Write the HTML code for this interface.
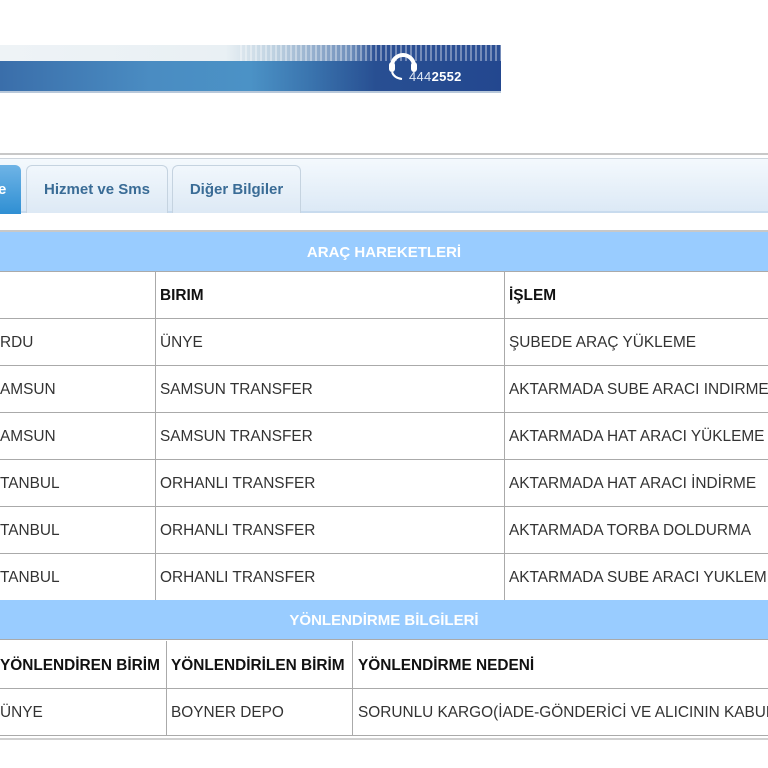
<!DOCTYPE html>
<html><head><meta charset="utf-8"><style>
*{margin:0;padding:0;box-sizing:border-box}
body{width:768px;height:768px;overflow:hidden;background:#fff;font-family:"Liberation Sans",Arial,sans-serif;position:relative}
.abs{position:absolute}
.cell{position:absolute;font-size:15.4px;color:#333;line-height:47px;white-space:nowrap;overflow:hidden;top:1px}
.hd{font-weight:bold;color:#111}
.hl{position:absolute;left:0;width:768px;height:1px;background:#aaa}
.vl{position:absolute;width:1px;background:#aaa}
.bh{position:absolute;left:0;width:768px;height:40px;background:#99ccff;color:#fff;font-weight:bold;font-size:15px;text-align:center;line-height:41px;border-bottom:1px solid #aaa}
</style></head><body>
<div class="abs" style="left:0;top:45px;width:501px;height:16px;background:linear-gradient(90deg,#eef3f6 0%,#e9f0f4 45%,#bcd0e0 55%,#6f8fbb 70%,#2b4f93 75%,#2b4f93 100%)"></div>
<div class="abs" style="left:240px;top:45px;width:261px;height:16px;background:repeating-linear-gradient(90deg,rgba(255,255,255,0.35) 0 2px,rgba(255,255,255,0) 2px 5px)"></div>
<div class="abs" style="left:0;top:61px;width:501px;height:30px;background:linear-gradient(90deg,#3a6eaa 0%,#4a8cc2 30%,#4b92c6 50%,#3a74ae 62%,#284f92 75%,#23478f 100%)"></div>
<div class="abs" style="left:0;top:91px;width:501px;height:2px;background:#b8c8da"></div>
<svg class="abs" style="left:388px;top:48px" width="30" height="34" viewBox="0 0 30 34"><path d="M4 18 A11 11 0 0 1 26 18" fill="none" stroke="#fff" stroke-width="4"/><rect x="1" y="14" width="6" height="10" rx="3" fill="#fff"/><rect x="23" y="14" width="6" height="10" rx="3" fill="#fff"/><path d="M4 24 Q6 30 14 31" fill="none" stroke="#fff" stroke-width="2"/></svg>
<div class="abs" style="left:409px;top:69px;font-size:13px;font-weight:bold;color:#fff;letter-spacing:0.3px"><span style="font-weight:normal;color:#dfe8f5">444</span>2552</div>
<div class="abs" style="left:0;top:153px;width:768px;height:2px;background:#c8c8c8"></div>
<div class="abs" style="left:0;top:158px;width:768px;height:55px;border-top:1px solid #ccd4dc;background:linear-gradient(#f4f9fd,#dce9f6);border-bottom:2px solid #c8dbee"></div>
<div class="abs" style="left:-10px;top:165px;width:31px;height:49px;border-radius:6px 6px 0 0;background:linear-gradient(#6fb4e6,#2f8fd3)"></div>
<div class="abs" style="left:-2px;top:165px;color:#fff;font-weight:bold;font-size:15px;line-height:49px">e</div>
<div class="abs" style="left:26px;top:165px;width:142px;height:48px;border:1px solid #c5d3e0;border-bottom:none;border-radius:6px 6px 0 0;background:linear-gradient(#f1f7fc,#dde9f5);color:#3a6c96;font-weight:bold;font-size:15px;line-height:47px;text-align:center">Hizmet ve Sms</div>
<div class="abs" style="left:172px;top:165px;width:129px;height:48px;border:1px solid #c5d3e0;border-bottom:none;border-radius:6px 6px 0 0;background:linear-gradient(#f1f7fc,#dde9f5);color:#3a6c96;font-weight:bold;font-size:15px;line-height:47px;text-align:center">Diğer Bilgiler</div>
<div class="abs" style="left:0;top:230px;width:768px;height:2px;background:#c8c8c8"></div>
<div class="bh" style="top:232px">ARAÇ HAREKETLERİ</div>
<div class="vl" style="left:155px;top:272px;height:328px"></div>
<div class="vl" style="left:504px;top:272px;height:328px"></div>
<div class="hl" style="top:318px"></div><div class="hl" style="top:365px"></div><div class="hl" style="top:412px"></div><div class="hl" style="top:459px"></div><div class="hl" style="top:506px"></div><div class="hl" style="top:553px"></div>
<div class="cell hd" style="left:160px;top:272px">BIRIM</div>
<div class="cell hd" style="left:509px;top:272px">İŞLEM</div>
<div class="cell" style="left:0;top:319px">RDU</div><div class="cell" style="left:160px;top:319px">ÜNYE</div><div class="cell" style="left:509px;top:319px">ŞUBEDE ARAÇ YÜKLEME</div>
<div class="cell" style="left:0;top:366px">AMSUN</div><div class="cell" style="left:160px;top:366px">SAMSUN TRANSFER</div><div class="cell" style="left:509px;top:366px">AKTARMADA SUBE ARACI INDIRME</div>
<div class="cell" style="left:0;top:413px">AMSUN</div><div class="cell" style="left:160px;top:413px">SAMSUN TRANSFER</div><div class="cell" style="left:509px;top:413px">AKTARMADA HAT ARACI YÜKLEME</div>
<div class="cell" style="left:0;top:460px">TANBUL</div><div class="cell" style="left:160px;top:460px">ORHANLI TRANSFER</div><div class="cell" style="left:509px;top:460px">AKTARMADA HAT ARACI İNDİRME</div>
<div class="cell" style="left:0;top:507px">TANBUL</div><div class="cell" style="left:160px;top:507px">ORHANLI TRANSFER</div><div class="cell" style="left:509px;top:507px">AKTARMADA TORBA DOLDURMA</div>
<div class="cell" style="left:0;top:554px">TANBUL</div><div class="cell" style="left:160px;top:554px">ORHANLI TRANSFER</div><div class="cell" style="left:509px;top:554px">AKTARMADA SUBE ARACI YUKLEME</div>
<div class="bh" style="top:600px">YÖNLENDİRME BİLGİLERİ</div>
<div class="vl" style="left:166px;top:641px;height:95px"></div>
<div class="vl" style="left:352px;top:641px;height:95px"></div>
<div class="hl" style="top:688px"></div>
<div class="cell hd" style="left:0;top:642px;width:166px">YÖNLENDİREN BİRİM</div>
<div class="cell hd" style="left:171px;top:642px">YÖNLENDİRİLEN BİRİM</div>
<div class="cell hd" style="left:358px;top:642px">YÖNLENDİRME NEDENİ</div>
<div class="cell" style="left:0;top:689px">ÜNYE</div><div class="cell" style="left:171px;top:689px">BOYNER DEPO</div><div class="cell" style="left:358px;top:689px">SORUNLU KARGO(İADE-GÖNDERİCİ VE ALICININ KABUL</div>
<div class="abs" style="left:0;top:735px;width:768px;height:1px;background:#aaa"></div>
<div class="abs" style="left:0;top:738px;width:768px;height:2px;background:#d0d0d0"></div>
</body></html>
